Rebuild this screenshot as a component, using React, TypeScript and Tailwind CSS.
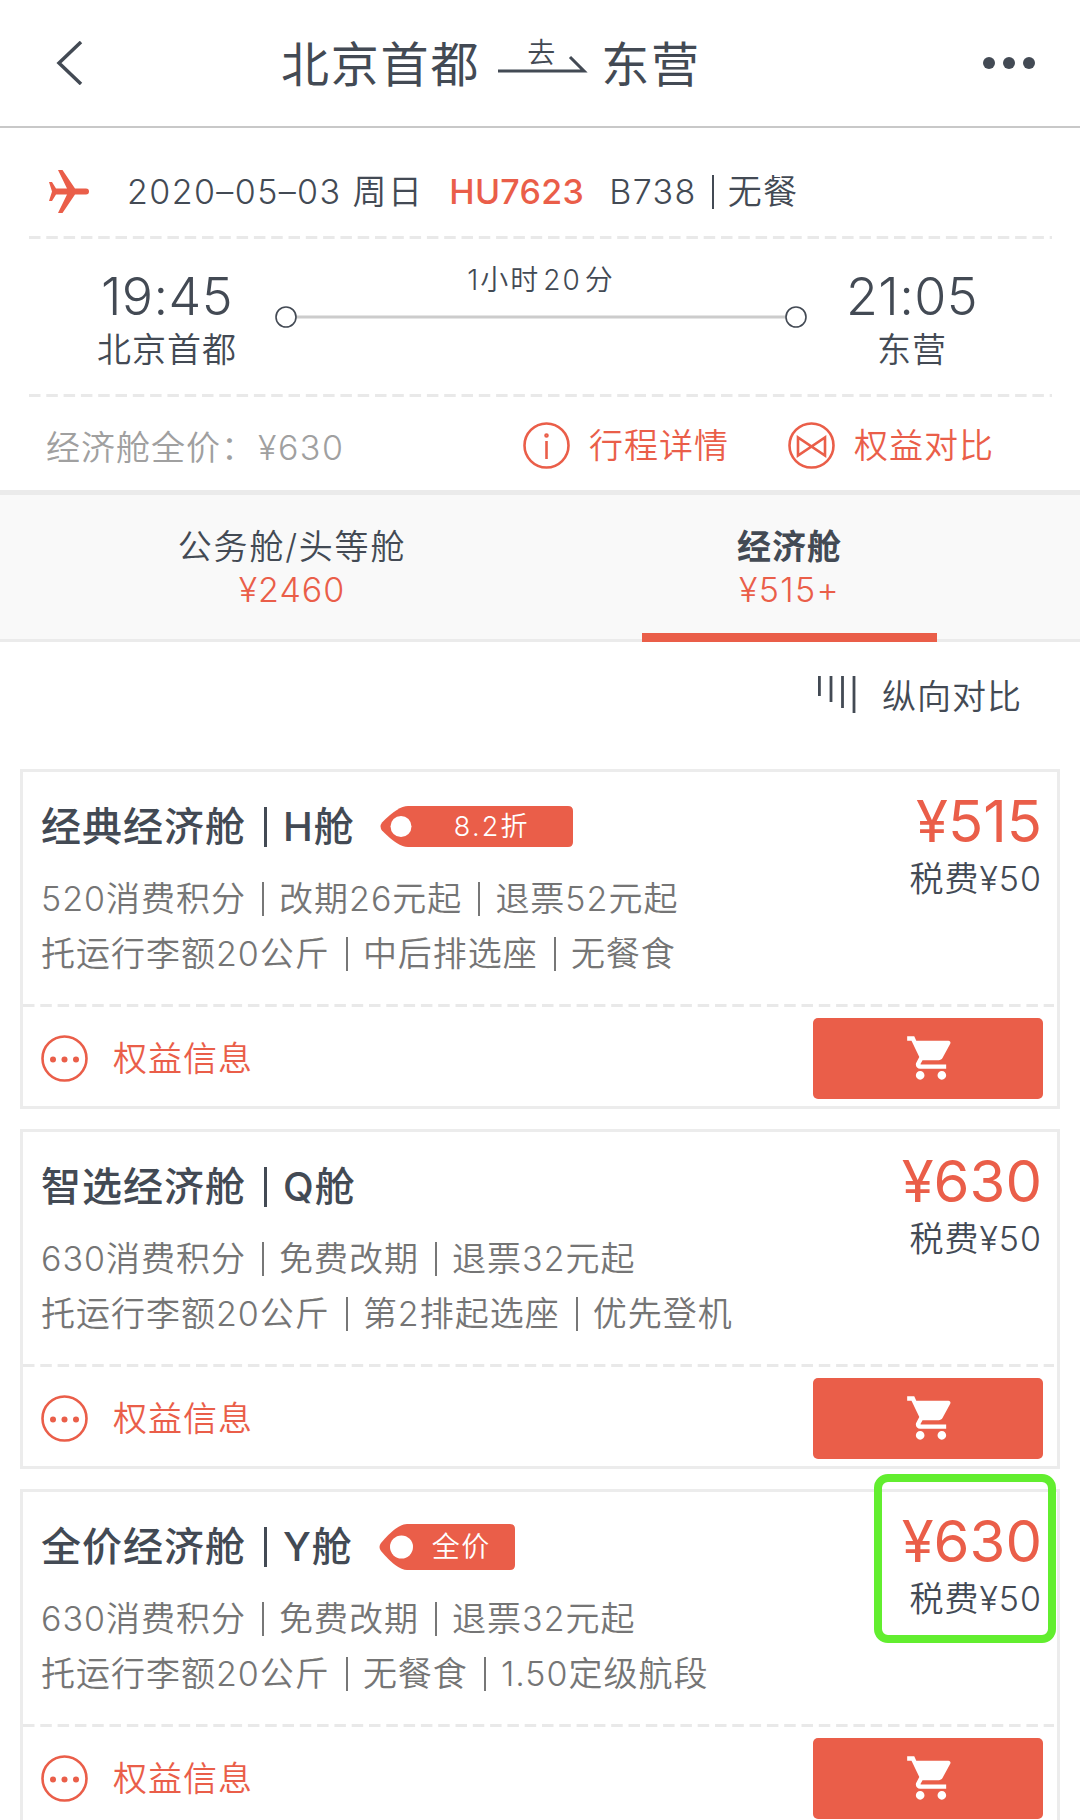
import { MdShoppingCart } from 'react-icons/md';

interface Fare {
  name: string;
  cabin: string;
  tag?: { label: string; wide: boolean };
  price: string;
  perks: string[][];
  highlighted?: boolean;
}

const fares: Fare[] = [
  {
    name: '经典经济舱',
    cabin: 'H舱',
    tag: { label: '8.2折', wide: true },
    price: '515',
    perks: [
      ['520消费积分', '改期26元起', '退票52元起'],
      ['托运行李额20公斤', '中后排选座', '无餐食'],
    ],
  },
  {
    name: '智选经济舱',
    cabin: 'Q舱',
    price: '630',
    perks: [
      ['630消费积分', '免费改期', '退票32元起'],
      ['托运行李额20公斤', '第2排起选座', '优先登机'],
    ],
  },
  {
    name: '全价经济舱',
    cabin: 'Y舱',
    tag: { label: '全价', wide: false },
    price: '630',
    perks: [
      ['630消费积分', '免费改期', '退票32元起'],
      ['托运行李额20公斤', '无餐食', '1.50定级航段'],
    ],
    highlighted: true,
  },
];

function DashedLine({ width, thickness = 3 }: { width: number; thickness?: number }) {
  return (
    <svg width={width} height={thickness} className="block shrink-0">
      <line
        x1="0"
        y1={thickness / 2}
        x2={width}
        y2={thickness / 2}
        stroke="#e9e9e9"
        strokeWidth={thickness}
        strokeDasharray="11.5 5.8"
      />
    </svg>
  );
}

function Divider({ className }: { className: string }) {
  return <span className={`inline-block shrink-0 ${className}`} />;
}

function PriceTag({ label, wide }: { label: string; wide: boolean }) {
  const w = wide ? 193 : 136;
  const h = wide ? 41 : 46;
  return (
    <div className={`relative -mt-px ${wide ? 'ml-[25px] h-[41px] w-[193px]' : 'ml-[26px] h-[46px] w-[136px]'}`}>
      <svg width={w} height={h} className="block">
        <path
          d={`M28 0H${w - 5}Q${w} 0 ${w} 5V${h - 5}Q${w} ${h} ${w - 5} ${h}H28Q18 ${h} 2 ${h / 2 + 4}Q-1 ${h / 2} 2 ${h / 2 - 4}Q18 0 28 0Z`}
          fill="#ea5e49"
        />
        <circle cx={wide ? 21 : 22.5} cy={h / 2} r={wide ? 10.5 : 11.5} fill="#fff" />
      </svg>
      <span
        className={`absolute inset-y-0 flex items-center font-[350] text-white ${
          wide ? 'left-[74px] pt-px text-[27px] tracking-[2.2px]' : 'left-[53px] text-[28px] tracking-[1.5px]'
        }`}
      >
        {label}
      </span>
    </div>
  );
}

function FareCard({ fare }: { fare: Fare }) {
  return (
    <section className="relative h-[340px] w-[1040px] shrink-0 border-[3px] border-[#ececec] bg-white">
      <div className="flex h-[232px] justify-between pr-[15px] pl-[18px]">
        <div className="pt-[26px]">
          <div className="flex h-[58px] items-center text-[40px] font-medium tracking-[1px] text-[#434a54]">
            <span>{fare.name}</span>
            <Divider className="mr-[16px] ml-[18px] h-[40px] w-[3px] bg-[#434a54]" />
            <span>{fare.cabin}</span>
            {fare.tag && <PriceTag label={fare.tag.label} wide={fare.tag.wide} />}
          </div>
          <div className="mt-[15px] text-[34px] tracking-[1px] text-[#757575]">
            {fare.perks.map((line) => (
              <div key={line.join()} className="flex h-[55px] items-center">
                {line.map((perk, i) => (
                  <span key={perk} className="flex items-center">
                    {i > 0 && <Divider className="mr-[15px] ml-[16px] h-[34px] w-0.5 bg-[#777]" />}
                    {perk}
                  </span>
                ))}
              </div>
            ))}
          </div>
        </div>
        <div className="flex flex-col items-end pt-[14px]">
          <div className="flex h-[70px] items-center text-[58px] leading-none font-normal text-[#ea5e49]">
            ¥{fare.price}
          </div>
          <div className="flex h-[44px] items-center text-[34px] tracking-[1px] text-[#434a54]">税费¥50</div>
        </div>
      </div>
      <DashedLine width={1031} />
      <div className="flex h-[99px] items-center justify-between pt-[3px] pr-[14px] pl-[18px]">
        <button className="flex items-center gap-[25px] text-[34px] tracking-[1px] text-[#ea5e49]">
          <svg width="47" height="47" viewBox="0 0 47 47" fill="#ea5e49">
            <circle cx="23.5" cy="23.5" r="22" fill="none" stroke="#ea5e49" strokeWidth="2.6" />
            <circle cx="12" cy="24.5" r="3" />
            <circle cx="23.5" cy="24.5" r="3" />
            <circle cx="35" cy="24.5" r="3" />
          </svg>
          权益信息
        </button>
        <button className="flex h-[81px] w-[230px] items-center justify-center rounded-[5px] bg-[#ea5e49] text-white">
          <MdShoppingCart size={52} className="ml-[5px]" />
        </button>
      </div>
      {fare.highlighted && (
        <div className="absolute -top-[18px] right-px h-[169px] w-[182px] rounded-[14px] border-8 border-[#62ee2f]" />
      )}
    </section>
  );
}

export default function App() {
  return (
    <div className="flex h-[1820px] w-[1080px] flex-col overflow-hidden bg-white font-['Inter','Noto_Sans_CJK_SC',sans-serif] font-[350] text-[#434a54]">
      <header className="flex h-[128px] shrink-0 items-center border-b-2 border-[#c8c8c8] pr-[44px] pl-[56px]">
        <svg width="28" height="44" viewBox="0 0 28 44" fill="none" stroke="#434a54" strokeWidth="3.5">
          <path d="M25 1L3 22L25 43" />
        </svg>
        <h1 className="ml-[197px] flex items-center pt-1 text-[48px] font-normal tracking-[1.8px]">
          北京首都
          <span className="mr-[13px] mb-[18px] ml-[18px] flex w-[90px] flex-col items-center">
            <span className="mr-1 text-[28px] leading-none font-[350] tracking-normal">去</span>
            <svg width="90" height="20" className="-mt-[14px]" fill="none" stroke="#434a54" strokeWidth="3">
              <path d="M0 18H86L72 4" />
            </svg>
          </span>
          东营
        </h1>
        <svg width="54" height="14" className="ml-auto" fill="#434a54">
          <circle cx="7" cy="7" r="6" />
          <circle cx="27" cy="7" r="6" />
          <circle cx="47" cy="7" r="6" />
        </svg>
      </header>

      {/* Flight summary */}
      <div className="flex h-[108px] shrink-0 items-center pt-[19px] pl-[49px] text-[34px] tracking-[1.4px]">
        <svg width="41" height="43" viewBox="0 0 41 43" fill="#ea5e49">
          <path d="M0 12H3L7 18.5H18L9 0H13.5L26 18.5H37A3 3 0 0 1 37 24.5H26L13.5 43H9L18 24.5H7L3 31H0L3 21.5Z" />
        </svg>
        <span className="ml-[37px]">2020–05–03 周日</span>
        <span className="ml-[26px] font-medium tracking-[0.3px] text-[#ea5e49]">HU7623</span>
        <span className="ml-[25px]">B738</span>
        <Divider className="mr-[14px] ml-[15px] h-[34px] w-0.5 bg-[#434a54]" />
        <span>无餐</span>
      </div>
      <div className="flex shrink-0 justify-center">
        <DashedLine width={1023} />
      </div>
      <div className="flex h-[155px] shrink-0">
        <div className="ml-[96px] flex w-[142px] flex-col items-center pt-[28px]">
          <div className="text-[52px] leading-[60px] tracking-[0.4px]">19:45</div>
          <div className="text-[34px] leading-[46px] tracking-[1px] whitespace-nowrap">北京首都</div>
        </div>
        <div className="ml-[36px] flex w-[534px] flex-col items-center pt-[21px]">
          <div className="text-[28px] leading-[40px] tracking-[2px]">
            1小时<span className="mx-[3px]">20</span>分
          </div>
          <svg width="534" height="24" className="mt-[5px]" fill="#fff" stroke="#434a54" strokeWidth="1.6">
            <line x1="22" y1="12" x2="512" y2="12" stroke="#ccc" strokeWidth="3" />
            <circle cx="12" cy="12" r="10" />
            <circle cx="522" cy="12" r="10" />
          </svg>
        </div>
        <div className="ml-[33px] flex w-[142px] flex-col items-center pt-[28px]">
          <div className="text-[52px] leading-[60px] tracking-[0.4px]">21:05</div>
          <div className="text-[34px] leading-[46px] tracking-[1px]">东营</div>
        </div>
      </div>
      <div className="flex shrink-0 justify-center">
        <DashedLine width={1023} />
      </div>
      <div className="flex h-[93px] shrink-0 items-center pl-[46px] text-[34px] tracking-[1px]">
        <span className="w-[477px] pt-[8px] text-[#a0a0a0]">
          经济舱全价：<span className="ml-0.5 tracking-[1.5px]">¥630</span>
        </span>
        <button className="mt-[3px] flex items-center gap-[19px] text-[#ea5e49]">
          <svg width="47" height="47" viewBox="0 0 47 47" fill="none" stroke="#ea5e49" strokeWidth="2.6">
            <circle cx="23.5" cy="23.5" r="22" />
            <path d="M23.5 19V37" />
            <circle cx="23.5" cy="13.5" r="1" />
          </svg>
          行程详情
        </button>
        <button className="mt-[3px] ml-[59px] flex items-center gap-[19px] text-[#ea5e49]">
          <svg width="47" height="47" viewBox="0 0 47 47" fill="none" stroke="#ea5e49" strokeWidth="2.6">
            <circle cx="23.5" cy="23.5" r="22" />
            <path d="M10 15.5V33.5L37 15.5V33.5Z" />
          </svg>
          权益对比
        </button>
      </div>

      {/* Cabin class tabs */}
      <div className="flex h-[152px] shrink-0 border-t-[5px] border-b-[3px] border-[#ebebeb] bg-[#f9f9f9] text-[34px] tracking-[1px]">
        <div className="flex w-[584px] flex-col items-center pt-[30px]">
          <div className="leading-[43px] tracking-[1.8px]">公务舱/头等舱</div>
          <div className="leading-[44px] text-[#ea5e49]">¥2460</div>
        </div>
        <div className="relative ml-[58px] flex w-[295px] flex-col items-center pt-[30px]">
          <div className="leading-[43px] font-bold">经济舱</div>
          <div className="leading-[44px] tracking-[1.3px] text-[#ea5e49]">¥515+</div>
          <div className="absolute inset-x-0 -bottom-[3px] h-[9px] bg-[#ea5e49]" />
        </div>
      </div>

      <div className="flex h-[127px] shrink-0 items-start justify-end pt-[29px] pr-[58px]">
        <svg width="42" height="40" className="mt-[5px]" stroke="#434a54" strokeWidth="2.8">
          <path d="M1.4 0V20M13 0V26M24.5 0V32M36 0V37" />
        </svg>
        <span className="ml-[22px] text-[34px] tracking-[1px]">纵向对比</span>
      </div>

      <main className="flex flex-col gap-5 pl-5">
        {fares.map((fare) => (
          <FareCard key={fare.name} fare={fare} />
        ))}
      </main>
    </div>
  );
}
